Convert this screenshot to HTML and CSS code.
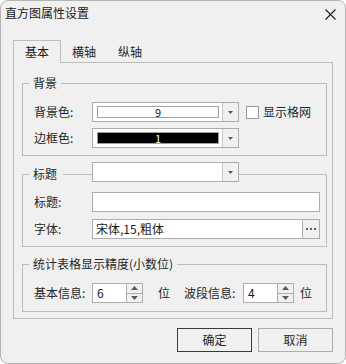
FILE: index.html
```html
<!DOCTYPE html>
<html lang="zh-CN">
<head>
<meta charset="utf-8">
<title>直方图属性设置</title>
<link rel="stylesheet" href="styles.css">
</head>
<body>
<div class="window">
  <div class="titlebar">
    <span class="title">直方图属性设置</span>
    <svg class="close" viewBox="0 0 11 11" width="11" height="11"><path d="M0.5 0.5L10.5 10.5M10.5 0.5L0.5 10.5" stroke="#1a1a1a" stroke-width="1.1" fill="none"/></svg>
  </div>
  <div class="content">
    <div class="tabs">
      <div class="tab active">基本</div>
      <div class="tab">横轴</div>
      <div class="tab">纵轴</div>
    </div>
    <div class="panel">
      <fieldset class="group g1">
        <legend class="legend">背景</legend>
        <div class="row">
          <span class="label">背景色:</span>
          <div class="combo">
            <div class="combo-field"><div class="swatch white">9</div></div>
            <div class="combo-btn"><svg viewBox="0 0 5 3" width="5" height="3"><path d="M0 0H5L2.5 3Z" fill="#5a5a5a"/></svg></div>
          </div>
          <div class="check"><span class="box"></span><span>显示格网</span></div>
        </div>
        <div class="row">
          <span class="label">边框色:</span>
          <div class="combo">
            <div class="combo-field"><div class="swatch black">1</div></div>
            <div class="combo-btn"><svg viewBox="0 0 5 3" width="5" height="3"><path d="M0 0H5L2.5 3Z" fill="#5a5a5a"/></svg></div>
          </div>
        </div>
      </fieldset>

      <fieldset class="group g2">
        <legend class="legend-combo">
          <span class="ltext">标题</span>
          <span class="legend-line"></span>
          <div class="combo">
            <div class="combo-field"></div>
            <div class="combo-btn"><svg viewBox="0 0 5 3" width="5" height="3"><path d="M0 0H5L2.5 3Z" fill="#5a5a5a"/></svg></div>
          </div>
        </legend>
        <div class="row">
          <span class="label">标题:</span>
          <div class="textbox"></div>
        </div>
        <div class="row">
          <span class="label">字体:</span>
          <div class="textbox font">
            <span class="font-text">宋体,15,粗体</span>
            <span class="dots"><svg viewBox="0 0 10 2" width="10" height="2"><rect x="0" y="0" width="2" height="2" fill="#606060"/><rect x="4" y="0" width="2" height="2" fill="#606060"/><rect x="8" y="0" width="2" height="2" fill="#606060"/></svg></span>
          </div>
        </div>
      </fieldset>

      <fieldset class="group g3">
        <legend class="legend">统计表格显示精度(小数位)</legend>
        <div class="row">
          <span class="label">基本信息:</span>
          <div class="spin">
            <span class="spin-input">6</span>
            <span class="spin-btns">
              <span><svg viewBox="0 0 7 4" width="7" height="4"><path d="M0 4H7L3.5 0Z" fill="#5a5a5a"/></svg></span>
              <span><svg viewBox="0 0 7 4" width="7" height="4"><path d="M0 0H7L3.5 4Z" fill="#5a5a5a"/></svg></span>
            </span>
          </div>
          <span class="unit">位</span>
          <span class="label label2">波段信息:</span>
          <div class="spin">
            <span class="spin-input">4</span>
            <span class="spin-btns">
              <span><svg viewBox="0 0 7 4" width="7" height="4"><path d="M0 4H7L3.5 0Z" fill="#5a5a5a"/></svg></span>
              <span><svg viewBox="0 0 7 4" width="7" height="4"><path d="M0 0H7L3.5 4Z" fill="#5a5a5a"/></svg></span>
            </span>
          </div>
          <span class="unit unit2">位</span>
        </div>
      </fieldset>
    </div>
    <div class="buttons">
      <button class="btn default">确定</button>
      <button class="btn">取消</button>
    </div>
  </div>
</div>
</body>
</html>
```

FILE: styles.css
```css
* { box-sizing: border-box; }
html, body { margin: 0; padding: 0; background: #ffffff; }
body {
  font-family: "Noto Sans CJK SC", "Noto Sans", sans-serif;
  font-size: 12px;
  line-height: 16px;
  color: #262626;
}
.window {
  width: 346px;
  height: 364px;
  border: 1px solid #b4b4b4;
  border-radius: 8px;
  background: #f0f0f0;
  overflow: hidden;
}
.titlebar {
  height: 24px;
  display: flex;
  align-items: center;
  justify-content: space-between;
  padding: 0 9px 0 4px;
}
.title { color: #1a1a1a; }
.close { display: block; margin-top: 3px; }

.content { padding: 15px 12px 0 12px; }

.tabs { display: flex; height: 22px; align-items: flex-start; }
.tab {
  width: 46px;
  height: 22px;
  padding-top: 4px;
  text-align: center;
  color: #262626;
}
.tab.active {
  width: 48px;
  height: 23px;
  padding-top: 3px;
  border: 1px solid #bcbcbc;
  border-bottom: none;
  background: #f0f0f0;
  position: relative;
  z-index: 1;
  color: #1a1a1a;
}

.panel {
  height: 257px;
  border: 1px solid #bcbcbc;
  padding: 12px 5px 0 8px;
}

.group {
  margin: 0;
  border: 1px solid #bcbcbc;
  min-width: 0;
}
.g1 { padding: 11px 5px 7px 11px; }
.g2 { padding: 5px 5px 7px 11px; margin-top: 6px; }
.g3 { padding: 11px 5px 8px 11px; margin-top: 9px; }

.legend {
  padding: 0 4px;
  margin-left: -5px;
  line-height: 16px;
}
.legend-combo {
  display: flex;
  align-items: flex-start;
  padding: 0 0 5px 4px;
  margin-left: -5px;
}
.ltext { padding-right: 6px; margin-top: 4px; }
.legend-line {
  width: 29px;
  height: 1px;
  background: #bcbcbc;
  margin-top: 12px;
}

.row { display: flex; align-items: center; height: 20px; }
.row + .row { margin-top: 6px; }
.g2 .row + .row { margin-top: 7px; }
.label { width: 58px; flex: none; }

.combo {
  width: 147px;
  height: 20px;
  flex: none;
  display: flex;
  border: 1px solid #adadad;
  background: #ffffff;
}
.combo-field { flex: 1; padding: 3px 3px 3px 4px; }
.swatch {
  height: 12px;
  border: 1px solid #a0a0a0;
  font-size: 11px;
  line-height: 10px;
  text-align: center;
}
.swatch.white { background: #ffffff; color: #1a1a1a; }
.swatch.black { background: #000000; color: #ffffff; }
.combo-btn {
  width: 16px;
  border-left: 1px solid #c8c8c8;
  background: #f0f0f0;
  display: flex;
  align-items: center;
  justify-content: center;
}
.combo-btn svg { display: block; }

.check { display: flex; align-items: center; margin-left: 7px; }
.box {
  width: 13px;
  height: 13px;
  border: 1px solid #9a9a9a;
  background: #ffffff;
  margin-right: 4px;
}

.textbox {
  width: 228px;
  height: 20px;
  border: 1px solid #adadad;
  background: #ffffff;
  flex: none;
}
.textbox.font { display: flex; }
.font-text { flex: 1; padding-left: 3px; line-height: 18px; color: #1a1a1a; }
.dots {
  width: 17px;
  border-left: 1px solid #adadad;
  background: #f0f0f0;
  display: flex;
  align-items: center;
  justify-content: center;
}
.dots svg { display: block; }

.spin {
  width: 51px;
  height: 20px;
  flex: none;
  display: flex;
  border: 1px solid #adadad;
  background: #ffffff;
}
.spin-input { flex: 1; padding-left: 4px; line-height: 18px; color: #1a1a1a; }
.spin-btns {
  width: 16px;
  border-left: 1px solid #adadad;
  background: #f0f0f0;
  display: flex;
  flex-direction: column;
}
.spin-btns span {
  flex: 1;
  display: flex;
  align-items: center;
  justify-content: center;
}
.spin-btns span + span { border-top: 1px solid #adadad; }
.spin-btns svg { display: block; }
.unit { margin-left: 15px; }
.label2 { width: 59px; margin-left: 14px; }
.unit2 { margin-left: 6px; }

.buttons {
  display: flex;
  justify-content: flex-end;
  gap: 6px;
  margin-top: 9px;
}
.btn {
  width: 75px;
  height: 24px;
  padding: 0;
  border: 1px solid #adadad;
  background: #f0f0f0;
  font: inherit;
  color: #262626;
}
.btn.default { border-color: #3a3a3a; }
```
